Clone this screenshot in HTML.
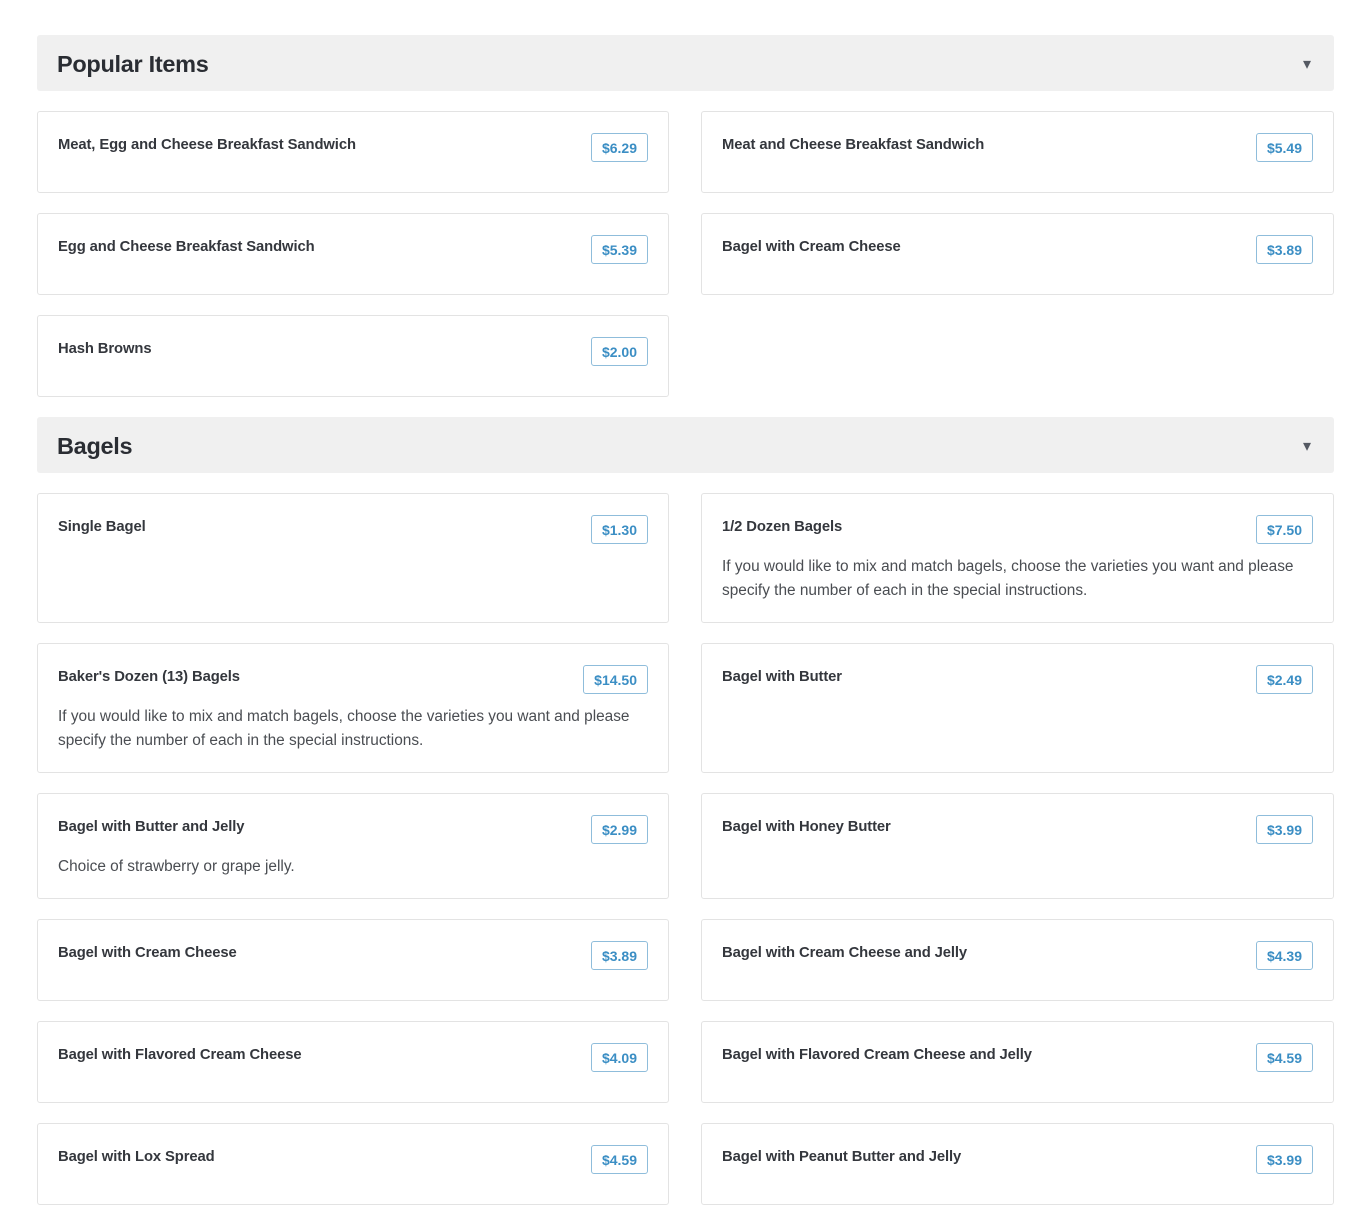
<!DOCTYPE html>
<html><head><meta charset="utf-8"><style>
html,body{overflow:hidden}
body{margin:0;background:#fff;font-family:"Liberation Sans",sans-serif;color:#2f3238}
.wrap{position:absolute;left:37px;top:35px;width:1297px}
.hd{height:56px;background:#f0f0f0;border-radius:3px;display:flex;align-items:center;justify-content:space-between;padding:0 20px;box-sizing:border-box;margin-bottom:20px}
.hd h2{margin:0;font-size:23.5px;font-weight:bold;color:#2a2d33;letter-spacing:-0.3px;padding-top:2px}
.hd span{font-size:16px;color:#555a63;margin-right:3px;padding-top:2px}
.grid{display:grid;grid-template-columns:632px 633px;column-gap:32px;row-gap:20px;margin-bottom:20px}
.c{border:1px solid #e3e3e3;border-radius:3px;padding:21px 20px 19px;position:relative}
.t{font-size:14.8px;font-weight:bold;line-height:24px;margin-bottom:16px;color:#34373d;letter-spacing:-0.1px}
.d{font-size:15.4px;line-height:24px;color:#4a4d52}
.p{position:absolute;right:20px;top:21px;border:1px solid #8fbddb;border-radius:3px;color:#3b8ec4;font-weight:bold;font-size:14px;height:27px;line-height:29px;padding:0 10px}
</style></head><body><div class="wrap">
<div class="hd"><h2>Popular Items</h2><span>▾</span></div>
<div class="grid">
<div class="c"><div class="t">Meat, Egg and Cheese Breakfast Sandwich</div><div class="p">$6.29</div></div>
<div class="c"><div class="t">Meat and Cheese Breakfast Sandwich</div><div class="p">$5.49</div></div>
<div class="c"><div class="t">Egg and Cheese Breakfast Sandwich</div><div class="p">$5.39</div></div>
<div class="c"><div class="t">Bagel with Cream Cheese</div><div class="p">$3.89</div></div>
<div class="c"><div class="t">Hash Browns</div><div class="p">$2.00</div></div>
</div>
<div class="hd"><h2>Bagels</h2><span>▾</span></div>
<div class="grid">
<div class="c"><div class="t">Single Bagel</div><div class="p">$1.30</div></div>
<div class="c"><div class="t">1/2 Dozen Bagels</div><div class="p">$7.50</div><div class="d">If you would like to mix and match bagels, choose the varieties you want and please specify the number of each in the special instructions.</div></div>
<div class="c"><div class="t">Baker's Dozen (13) Bagels</div><div class="p">$14.50</div><div class="d">If you would like to mix and match bagels, choose the varieties you want and please specify the number of each in the special instructions.</div></div>
<div class="c"><div class="t">Bagel with Butter</div><div class="p">$2.49</div></div>
<div class="c"><div class="t">Bagel with Butter and Jelly</div><div class="p">$2.99</div><div class="d">Choice of strawberry or grape jelly.</div></div>
<div class="c"><div class="t">Bagel with Honey Butter</div><div class="p">$3.99</div></div>
<div class="c"><div class="t">Bagel with Cream Cheese</div><div class="p">$3.89</div></div>
<div class="c"><div class="t">Bagel with Cream Cheese and Jelly</div><div class="p">$4.39</div></div>
<div class="c"><div class="t">Bagel with Flavored Cream Cheese</div><div class="p">$4.09</div></div>
<div class="c"><div class="t">Bagel with Flavored Cream Cheese and Jelly</div><div class="p">$4.59</div></div>
<div class="c"><div class="t">Bagel with Lox Spread</div><div class="p">$4.59</div></div>
<div class="c"><div class="t">Bagel with Peanut Butter and Jelly</div><div class="p">$3.99</div></div>
</div>
</div></body></html>
